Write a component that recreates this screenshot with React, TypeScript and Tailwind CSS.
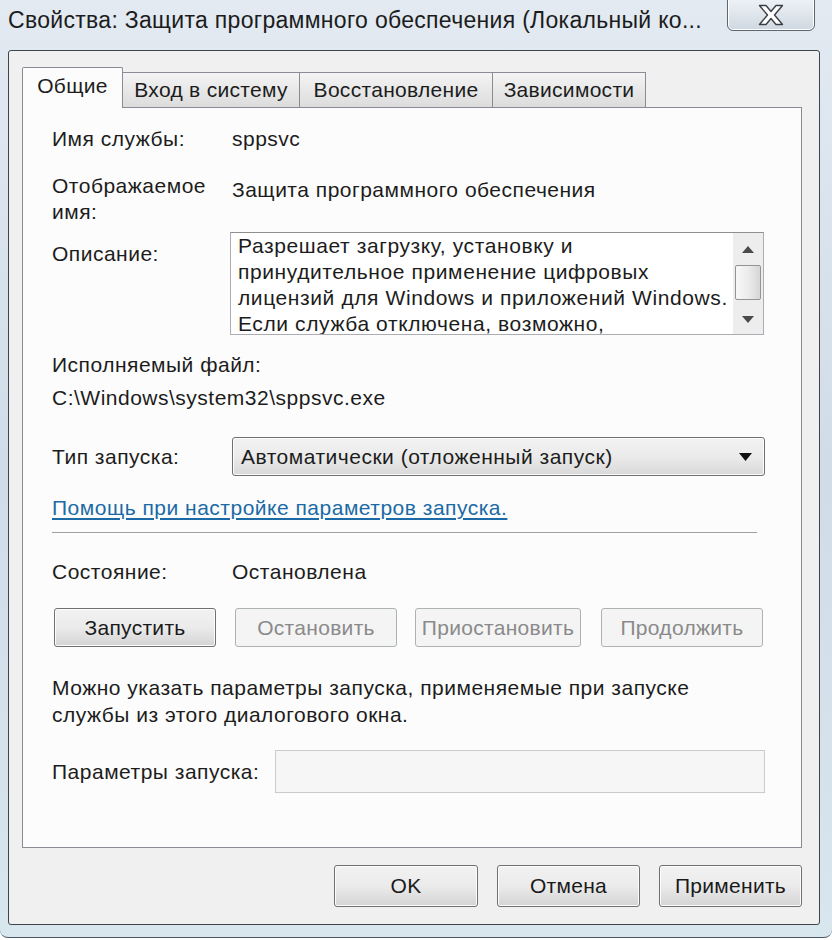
import React from "react";

function CloseGlyph() {
  return (
    <svg width="28" height="22" viewBox="0 0 28 22">
      <path
        d="M2.5 1.5 L9 1.5 L14 7.5 L19 1.5 L25.5 1.5 L17.5 11 L25.5 20.5 L19 20.5 L14 14.5 L9 20.5 L2.5 20.5 L10.5 11 Z"
        fill="#ffffff"
        stroke="#3b3f45"
        strokeWidth="1.4"
        strokeLinejoin="round"
      />
    </svg>
  );
}

function Btn({
  children,
  w,
  disabled,
  h = "h-[39px]",
}: {
  children: React.ReactNode;
  w: string;
  disabled?: boolean;
  h?: string;
}) {
  if (disabled) {
    return (
      <div
        className={`${w} ${h} flex items-center justify-center rounded-[3px] border border-[#adb2b5] bg-[#f4f4f4] text-[#8a8a8a]`}
      >
        {children}
      </div>
    );
  }
  return (
    <div
      className={`${w} ${h} flex items-center justify-center rounded-[3px] border border-[#707070] bg-gradient-to-b from-[#f2f2f2] via-[#ebebeb] to-[#d4d4d4] text-[#1a1a1a] shadow-[inset_0_0_0_1px_#fcfcfc]`}
    >
      {children}
    </div>
  );
}

function ScrollBar() {
  return (
    <div className="w-[30px] h-full bg-[#ededed] flex flex-col items-center">
      <div className="h-[32px] w-full flex items-center justify-center">
        <svg width="12" height="7" viewBox="0 0 12 7">
          <path d="M6 0 L12 7 L0 7 Z" fill="#4a4a4a" />
        </svg>
      </div>
      <div className="w-[26px] h-[35px] rounded-[2px] border border-[#939393] bg-gradient-to-r from-[#f7f7f7] via-[#ececec] to-[#d6d6d6]" />
      <div className="flex-1 w-full flex items-center justify-center pt-[4px]">
        <svg width="12" height="7" viewBox="0 0 12 7">
          <path d="M0 0 L12 0 L6 7 Z" fill="#4a4a4a" />
        </svg>
      </div>
    </div>
  );
}

export default function App() {
  return (
    <div className="w-[832px] h-[940px] bg-white font-['Liberation_Sans',Arial,sans-serif] text-[21px] tracking-[0.5px] text-[#1c1c1c]">
      <div className="w-[832px] h-[938px] flex flex-col bg-gradient-to-b from-[#e3eaf2] via-[#d0dce8] to-[#d8e6ee] border-b border-[#4b5560] rounded-b-[8px]">
        {/* title bar */}
        <div className="h-[50px] flex items-start">
          <div className="pl-[8px] pt-[5px] text-[23px] leading-[30px] tracking-[0.3px] whitespace-nowrap">
            Свойства: Защита программного обеспечения (Локальный ко...
          </div>
          <div className="ml-auto mr-[17px] -mt-[2px] w-[88px] h-[33px] rounded-b-[6px] border border-[#5e6670] bg-gradient-to-b from-[#eef2f6] to-[#cfd8e1] flex items-center justify-center shadow-[inset_0_0_0_1px_#ffffff]">
            <CloseGlyph />
          </div>
        </div>

        {/* client area */}
        <div className="ml-[8px] w-[812px] h-[875px] border border-[#3f454c] rounded-[3px] bg-[#f0f0f0] pl-[13px] pt-[16px] flex flex-col">
          {/* tabs */}
          <div className="h-[40px] flex items-end whitespace-nowrap tracking-[0.3px]">
            <div className="relative z-10 -mb-px w-[101px] h-[41px] border border-b-0 border-[#898c95] rounded-t-[2px] bg-[#fcfcfc] flex items-start justify-center pt-[5px] leading-[26px]">
              Общие
            </div>
            <div className="w-[177px] h-[35px] border-t border-r border-[#898c95] bg-gradient-to-b from-[#f4f4f4] to-[#dcdcdc] flex items-center justify-center leading-[26px]">
              Вход в систему
            </div>
            <div className="w-[193px] h-[35px] border-t border-r border-[#898c95] bg-gradient-to-b from-[#f4f4f4] to-[#dcdcdc] flex items-center justify-center leading-[26px]">
              Восстановление
            </div>
            <div className="w-[153px] h-[35px] border-t border-r border-[#898c95] bg-gradient-to-b from-[#f4f4f4] to-[#dcdcdc] flex items-center justify-center leading-[26px]">
              Зависимости
            </div>
          </div>

          {/* tab panel */}
          <div className="w-[780px] h-[741px] border border-[#898c95] bg-[#fcfcfc] pl-[29px] pt-[18px] flex flex-col leading-[26px] whitespace-nowrap">
            <div className="flex h-[26px]">
              <div className="w-[180px]">Имя службы:</div>
              <div>sppsvc</div>
            </div>

            <div className="flex mt-[21px]">
              <div className="w-[180px]">
                <div>Отображаемое</div>
                <div>имя:</div>
              </div>
              <div className="mt-[4px]">Защита программного обеспечения</div>
            </div>

            <div className="flex mt-[7px]">
              <div className="w-[180px] mt-[9px]">Описание:</div>
              <div className="-ml-[2px] w-[534px] h-[103px] border border-[#abadb3] border-t-[#8e8f8f] bg-white flex">
                <div className="flex-1 pl-[7px] overflow-hidden tracking-[0.6px]">
                  <div>Разрешает загрузку, установку и</div>
                  <div>принудительное применение цифровых</div>
                  <div>лицензий для Windows и приложений Windows.</div>
                  <div>Если служба отключена, возможно,</div>
                </div>
                <ScrollBar />
              </div>
            </div>

            <div className="mt-[17px]">Исполняемый файл:</div>
            <div className="mt-[7px]">C:\Windows\system32\sppsvc.exe</div>

            <div className="flex items-center mt-[26px] h-[39px]">
              <div className="w-[180px]">Тип запуска:</div>
              <div className="w-[533px] h-[39px] rounded-[3px] border border-[#707070] bg-gradient-to-b from-[#f2f2f2] via-[#ebebeb] to-[#d9d9d9] shadow-[inset_0_0_0_1px_#fcfcfc] flex items-center pl-[8px] pr-[12px]">
                <div className="flex-1">Автоматически (отложенный запуск)</div>
                <svg width="13" height="8" viewBox="0 0 13 8">
                  <path d="M0 0 L13 0 L6.5 8 Z" fill="#111111" />
                </svg>
              </div>
            </div>

            <div className="mt-[19px]">
              <span className="text-[#1b6aa5] underline underline-offset-[3px]">
                Помощь при настройке параметров запуска.
              </span>
            </div>

            <div className="mt-[11px] w-[705px] h-px bg-[#a0a0a0]" />

            <div className="flex mt-[26px]">
              <div className="w-[180px]">Состояние:</div>
              <div>Остановлена</div>
            </div>

            <div className="flex mt-[23px] ml-[2px] tracking-[0.3px]">
              <Btn w="w-[162px]">Запустить</Btn>
              <div className="ml-[19px]">
                <Btn w="w-[162px]" disabled>
                  Остановить
                </Btn>
              </div>
              <div className="ml-[18px]">
                <Btn w="w-[166px]" disabled>
                  Приостановить
                </Btn>
              </div>
              <div className="ml-[20px]">
                <Btn w="w-[162px]" disabled>
                  Продолжить
                </Btn>
              </div>
            </div>

            <div className="mt-[27px] leading-[27px]">
              <div>Можно указать параметры запуска, применяемые при запуске</div>
              <div>службы из этого диалогового окна.</div>
            </div>

            <div className="flex items-center mt-[22px]">
              <div className="w-[223px]">Параметры запуска:</div>
              <div className="w-[490px] h-[43px] border border-[#c9cbcf] bg-[#f6f6f6]" />
            </div>
          </div>

          {/* dialog buttons */}
          <div className="w-[780px] flex justify-end gap-[19px] mt-[17px] tracking-[0.3px]">
            <Btn w="w-[144px]" h="h-[42px]">
              OK
            </Btn>
            <Btn w="w-[143px]" h="h-[42px]">
              Отмена
            </Btn>
            <Btn w="w-[143px]" h="h-[42px]">
              Применить
            </Btn>
          </div>
        </div>
      </div>
    </div>
  );
}
